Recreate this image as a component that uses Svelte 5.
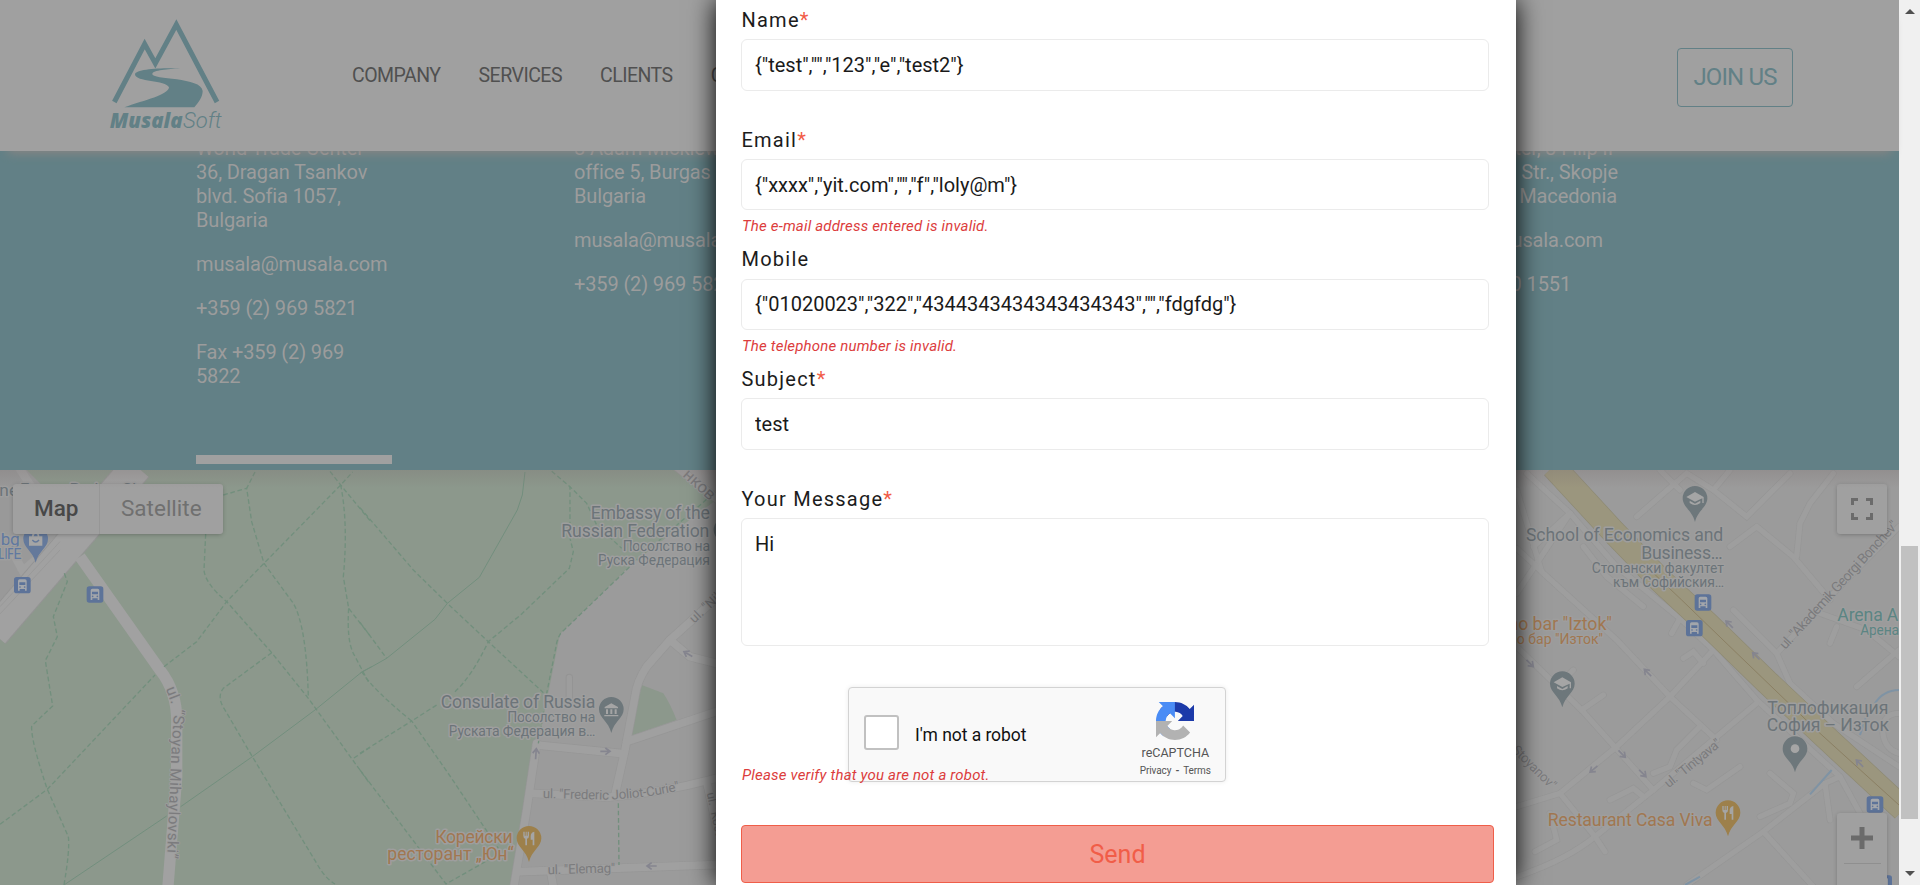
<script>
  const nav = ['COMPANY', 'SERVICES', 'CLIENTS', 'CAREERS'];
  const sofia = [['World Trade Center', '36, Dragan Tsankov', 'blvd. Sofia 1057,', 'Bulgaria'], ['musala@musala.com'], ['+359 (2) 969 5821'], ['Fax +359 (2) 969', '5822']];
  const burgas = [['8 Adam Mickiewicz,', 'office 5, Burgas 8001', 'Bulgaria'], ['musala@musala.com'], ['+359 (2) 969 5821']];
  const skopje = [
    [{ t: 'Center, 3 Filip II', w: 202 }, { t: 'Makedonski Str., Skopje', w: 207 }, { t: '1000, Macedonia', w: 206 }],
    [{ t: 'musala@musala.com', w: 192 }],
    [{ t: '+389 2 510 1551', w: 160 }]
  ];
  const fields = [
    { label: 'Name', req: true, value: '{"test","","123","e","test2"}', error: '' },
    { label: 'Email', req: true, value: '{"xxxx","yit.com","","f","loly@m"}', error: 'The e-mail address entered is invalid.' },
    { label: 'Mobile', req: false, value: '{"01020023","322","4344343434343434343","","fdgfdg"}', error: 'The telephone number is invalid.' },
    { label: 'Subject', req: true, value: 'test', error: '' }
  ];

  const westTrails = [
    'M193 340L202 365 160 470 172 530 136 602 158 738 95 798Q92 840 142 988L205 1130Q210 1170 192 1275',
    'M0 1093L142 988 465 645', 'M492 620L590 545 680 425 792 310 1022 75 1058 36',
    'M765 36L740 85 755 185 792 310 880 430Q920 500 925 715', 'M670 105L740 85',
    'M617 222L612 330Q615 370 680 425L815 578 925 715 1110 972',
    'M815 578L670 685Q650 710 672 745L757 890 950 1210Q975 1255 1005 1272',
    'M990 34L1022 75 1110 182', 'M1022 75Q1045 190 1030 350L1046 445 1110 527',
    'M1046 445Q1040 540 1060 580L1105 665', 'M1110 862L1056 898'
  ];
  const eastTrails = [
    'M0 143L160 330 262 430 385 545 550 698', 'M0 487L80 595', 'M5 635Q40 690 155 783L230 735',
    'M0 880L155 783 268 945 385 1120 415 1165', 'M285 695Q335 650 385 545L485 462 628 325 640 275 630 235 630 80',
    'M575 34L630 80 680 130 710 195 785 265', 'M0 930L258 1272 385 1200', 'M1040 118L905 235 820 310 602 520Q590 540 588 560L560 700 535 850',
    'M775 1030L777 1215'
  ];
  const centreRoads = [
    'M1068 415L930 540 860 620Q830 665 825 710L795 870 766 1000', 'M930 540L990 590 1068 610', 'M530 855L780 880',
    'M800 845L1068 755', 'M517 1000L740 1012Q900 1000 1068 955', 'M480 1235L1068 1214', 'M530 850L500 1050 460 1290',
    'M573 1240L580 1280', 'M950 20L1075 120', 'M1040 965L1070 1100'
  ];
  const rightRoads = [
    'M80 40L210 160 350 320 540 475 640 570 770 720 900 840 1020 950 1080 1060',
    'M50 90L125 335 350 540 510 710 650 840', 'M50 400L210 160', 'M50 265L125 335', 'M210 160L100 260',
    'M410 170L560 40 640 90 740 170 870 40', 'M480 30L540 90', 'M640 90L690 30', 'M540 475L515 520',
    'M250 260L320 350 430 440', 'M50 560L245 750 460 990', 'M245 750L310 705', 'M180 670L220 630',
    'M640 570L510 710 350 860 180 1000 50 1040', 'M50 1250Q200 1200 285 1130L460 990 770 730',
    'M180 1000L285 1130 315 1175', 'M105 1175L170 1140 150 1060', 'M330 1020L400 985 430 1010',
    'M600 800L530 870 510 920 460 940', 'M550 595L580 575 610 610', 'M560 1275L790 1115 975 970 1020 950',
    'M790 1115L940 1280', 'M975 970L990 1080', 'M720 920L620 990 580 970', 'M810 940L880 1000 870 1030 780 1070',
    'M770 200L690 260M770 200L880 290 990 420', 'M1000 40L930 130 900 190 890 290',
    'M830 580L980 420 1197 200', 'M960 460L1100 510 1197 590', 'M1070 680L1197 570', 'M990 550L1010 500',
    'M700 450L830 580 870 670 1000 790 1197 920', 'M1197 760Q1140 760 1150 830Q1160 870 1197 880'
  ];
  const buses = [[67, 375], [285, 403]];
  const busesEast = [[609, 427], [583, 504], [1125, 1033], [1151, 1270]];
  const arrowsEast = [[90, 610, 45], [443, 638, 225], [688, 493, 225], [768, 588, 225], [1079, 910, 225], [366, 882, 45], [428, 940, 45], [281, 927, 140]];
</script>

{#snippet pin(x, y, kind, fill)}
  <g transform="translate({x} {y})">
    <path d="M-37 0A37 37 0 0 1 37 0C37 27 8 36 0 71C-8 36-37 27-37 0Z" {fill} />
    {#if kind === 'food'}
      <path d="M-17-20v12q0 8 6 9v20h5v-20q6-1 6-9v-12h-4v12h-3v-12h-3v12h-3v-12zM5-7q0-11 11-13v41h-5v-17h-6z" fill="#a5a5a5" />
    {:else if kind === 'school'}
      <path d="M-26-4L0-19 26-4V14H22V0L0 10Z M-16 7L0 16 16 7V14Q0 26-16 14Z" fill="#a5a5a5" />
    {:else if kind === 'bank'}
      <path d="M-20-7L0-18 20-7V-3H-20ZM-16 0h6v14h-6zM-3 0h6v14h-6zM10 0h6v14h-6zM-21 17h42v4h-42z" fill="#a5a5a5" />
    {:else if kind === 'shop'}
      <path d="M-20-8h9q0-13 11-13t11 13h9v28h-40zM-6-8H6q0-8-6-8t-6 8z" fill="#a5a5a5" />
      <path d="M-10 3q10 12 20 0" fill="none" stroke={fill} stroke-width="4" />
    {:else}
      <circle r="13" fill="#a5a5a5" />
    {/if}
  </g>
{/snippet}

{#snippet bus(x, y)}
  <g transform="translate({x} {y})">
    <rect x="-25" y="-24" width="50" height="49" rx="8" fill="#5d7399" />
    <path d="M-13-12q0-5 5-5H8q5 0 5 5V17H8v-5H-8v5h-5zM-9-8V0H9V-8z" fill="#a3a6ab" />
    <circle cx="-7" cy="6" r="2.5" fill="#5d7399" /><circle cx="7" cy="6" r="2.5" fill="#5d7399" />
  </g>
{/snippet}

<div class="screen">
  <div class="site">
    <header>
      <svg class="logo" viewBox="0 0 480 450" width="160" height="150">
        <path d="M73 306L164 132 196 190 259 74 381 306" fill="none" stroke="#628086" stroke-width="15" />
        <path d="M270 205C210 203 136 207 135 223C136 247 228 240 237 262C235 285 165 300 103 322H313C327 305 338 290 338 273C335 230 185 240 187 222C188 210 235 208 270 205Z" fill="#628086" />
        <text x="59" y="384" textLength="219" lengthAdjust="spacingAndGlyphs" class="bold">Musala</text>
        <text x="279" y="384" textLength="116" lengthAdjust="spacingAndGlyphs" class="thin">Soft</text>
      </svg>
      <nav>{#each nav as item}<span>{item}</span>{/each}</nav>
      <button class="join">JOIN US</button>
    </header>

    <section class="offices">
      <div class="office first">
        {#each sofia as para}<p>{#each para as line}<span>{line}</span>{/each}</p>{/each}
        <div class="bar"></div>
      </div>
      <div class="office second">
        {#each burgas as para}<p>{#each para as line}<span>{line}</span>{/each}</p>{/each}
      </div>
      <div class="office third">
        {#each skopje as para}<p>{#each para as line}<span style="width:{line.w}px">{line.t}</span>{/each}</p>{/each}
      </div>
    </section>

    <div class="map">
      <svg viewBox="0 470 1899 415" width="1899" height="415">
        <rect y="470" width="1899" height="415" fill="#9b9b9b" />
        <path d="M0 470H680L716 500 633 563 560 634 537 750 512 885H0Z" fill="#8c988c" />
        <g transform="translate(0 460) scale(.33333)">
          <path d="M0 30H80L200 150 235 225 0 500Z" fill="#999" />
          <path d="M55 20L110 105M40 280L75 345M60 340L180 235" fill="none" stroke="#a0a0a0" stroke-width="25" />
          <path d="M-20 520L410 20" stroke="#949494" stroke-width="98" />
          <path d="M-20 520L410 20" stroke="#a1a1a1" stroke-width="92" />
          <path d="M0 462L180 270M0 440L180 245" stroke="#959595" stroke-width="2" />
          <path d="M240 290L480 630Q535 700 530 800L530 950 503 1290" fill="none" stroke="#a1a1a1" stroke-width="34" />
          <g class="trails">{#each westTrails as d}<path {d} />{/each}</g>
          <path d="M192 1275L500 1068M542 1040L757 890 945 750 1088 634 1115 620" fill="none" stroke="#728f7d" stroke-width="3" />
          <g class="label grey"><text x="-2" y="108" font-size="52">ne</text><text x="60" y="106" font-size="50">Fusao Park – Sky</text></g>
          <g class="label blue"><text x="2" y="254" font-size="52" textLength="57">bg</text><text x="-6" y="297" font-size="42" textLength="70">LIFE</text></g>
          {@render pin(107, 237, 'shop', '#64799b')}
          {#each buses as [x, y]}{@render bus(x, y)}{/each}
          <path id="stoyan" d="M497 686L522 752Q516 850 512 920L500 1220" fill="none" />
          <g class="label street"><text font-size="46"><textPath href="#stoyan" textLength="515">ul. “Stoyan Mihaylovski”</textPath></text></g>
        </g>

        <g transform="translate(360 460) scale(.33333)">
          <path d="M845 675L910 700Q930 730 950 780L810 828Z" fill="#8c988c" />
          <g class="edge">{#each centreRoads as d}<path {d} />{/each}</g>
          <path d="M628 652V735" stroke="#949494" stroke-width="22" stroke-linecap="round" />
          <g class="road">{#each centreRoads as d}<path {d} />{/each}</g>
          <path d="M628 652V735" stroke="#9d9d9d" stroke-width="16" stroke-linecap="round" />
          <g class="trails">{#each eastTrails as d}<path {d} />{/each}</g>
          <path d="M0 640L80 595 225 478 262 430 358 352 472 150 487 105 495 36" fill="none" stroke="#728f7d" stroke-width="3" />
          <g class="arrows">
            <path transform="translate(528 880) rotate(-86)" d="M-18 0H12M0-10L14 0 0 10" />
            <path transform="translate(736 874)" d="M-15 0H12M0-10L14 0 0 10" />
            <path transform="translate(984 582) rotate(210)" d="M-15 0H12M0-10L14 0 0 10" />
            <path transform="translate(875 1218) rotate(180)" d="M-15 0H12M0-10L14 0 0 10" />
          </g>
          <g class="label grey">
            <text x="692" y="178" font-size="53" textLength="358">Embassy of the</text>
            <text x="604" y="231" font-size="53" textLength="444">Russian Federation</text>
            <text x="788" y="273" font-size="42" textLength="262">Посолство на</text>
            <text x="714" y="315" font-size="42" textLength="336">Руска Федерация</text>
            <text x="242" y="745" font-size="53" textLength="464">Consulate of Russia</text>
            <text x="442" y="787" font-size="42" textLength="264">Посолство на</text>
            <text x="266" y="829" font-size="42" textLength="440">Руската Федерация в…</text>
          </g>
          <g class="label orange">
            <text x="226" y="1148" font-size="53" textLength="232">Корейски</text>
            <text x="82" y="1200" font-size="53" textLength="379">ресторант „Юн“</text>
          </g>
          <path id="curie" d="M548 1014L740 1019Q860 1015 965 990" fill="none" />
          <g class="label street">
            <text font-size="40"><textPath href="#curie" textLength="414">ul. "Frederic Joliot-Curie"</textPath></text>
            <text font-size="40" transform="translate(563 1243) rotate(-1.5)" textLength="203">ul. "Elemag"</text>
            <text font-size="40" transform="translate(1003 491) rotate(-43)">ul. "Nikolay</text>
            <text font-size="50" transform="translate(966 48) rotate(42)">нков</text>
            <text font-size="36" transform="translate(1040 1000) rotate(78)">ul. "Kosta</text>
          </g>
          {@render pin(754, 748, 'bank', '#6d777b')}
          {@render pin(507, 1135, 'food', '#9d804b')}
          {@render pin(1098, 210, 'bank', '#6d777b')}
        </g>

        <g transform="translate(1500 460) scale(.33333)">
          <g class="edge small">{#each rightRoads as d}<path {d} />{/each}</g>
          <g class="road small">{#each rightRoads as d}<path {d} />{/each}</g>
          <path d="M160 20L340 215 480 360 620 490 800 665 970 825 1110 955 1210 1048" fill="none" stroke="#8e8a74" stroke-width="75" />
          <path d="M160 20L340 215 480 360 620 490 800 665 970 825 1110 955 1210 1048" fill="none" stroke="#9b967e" stroke-width="71" />
          <path d="M440 320L545 420 690 560 960 820 1197 1035" fill="none" stroke="#8b8063" stroke-width="3" />
          <path d="M1080 825L1097 775M1125 730Q1150 690 1200 690M930 1003L995 930M555 1275L600 1250" fill="none" stroke="#7f93a4" stroke-width="6" />
          <g class="arrows">{#each arrowsEast as [x, y, r]}<path transform="translate({x} {y}) rotate({r})" d="M-15 0H12M0-10L14 0 0 10" />{/each}</g>
          <g class="label grey">
            <text x="78" y="243" font-size="53" textLength="592">School of Economics and</text>
            <text x="424" y="296" font-size="53" textLength="244">Business…</text>
            <text x="275" y="340" font-size="42" textLength="397">Стопански факултет</text>
            <text x="339" y="382" font-size="42" textLength="333">към Софийския…</text>
            <text x="802" y="762" font-size="53" textLength="363">Топлофикация</text>
            <text x="800" y="814" font-size="53" textLength="367">София – Изток</text>
          </g>
          <g class="label orange">
            <text x="336" y="511" font-size="53" text-anchor="end">Piano bar "Iztok"</text>
            <text x="309" y="553" font-size="42" text-anchor="end">Пиано бар "Изток"</text>
            <text x="143" y="1097" font-size="53" textLength="495">Restaurant Casa Viva</text>
          </g>
          <g class="label teal">
            <text x="1012" y="483" font-size="53" textLength="183">Arena A</text>
            <text x="1081" y="526" font-size="42" textLength="116">Арена</text>
          </g>
          <g class="label street">
            <text font-size="42" transform="translate(856 570) rotate(-47.5)" textLength="505">ul. "Akademik Georgi Bonchev"</text>
            <text font-size="40" transform="translate(506 985) rotate(-39)" textLength="206">ul. "Tintyava"</text>
            <text font-size="40" transform="translate(34 872) rotate(45)" textLength="168">Stoyanov"</text>
          </g>
          {@render pin(585, 115, 'school', '#6d777b')}
          {@render pin(187, 671, 'school', '#6d777b')}
          {@render pin(885, 866, '', '#6d777b')}
          {@render pin(684, 1058, 'food', '#9d804b')}
          {#each busesEast as [x, y]}{@render bus(x, y)}{/each}
        </g>
      </svg>
      <div class="types"><b>Map</b><span>Satellite</span></div>
      <div class="control full">
        <svg viewBox="0 0 22 22" width="22" height="22"><path d="M1.5 7V1.5H7M15 1.5h5.500V7M20.500 15v5.500H15M7 20.500H1.500V15" fill="none" stroke="#6b6b6b" stroke-width="3" /></svg>
      </div>
      <div class="control zoom">
        <svg viewBox="0 0 22 22" width="22" height="22"><path d="M11 0V22M0 11H22" stroke="#6b6b6b" stroke-width="5" /></svg>
        <hr />
      </div>
    </div>
  </div>

  <div class="scroll">
    <i class="up"></i>
    <div class="thumb"></div>
    <i class="down"></i>
  </div>

  <div class="modal">
    {#each fields as f}
      <div class="field">
        <label for={f.label}>{f.label}{#if f.req}<em>*</em>{/if}</label>
        <input id={f.label} value={f.value} spellcheck="false" />
        {#if f.error}<p class="error">{f.error}</p>{/if}
      </div>
    {/each}
    <div class="field message">
      <label for="msg">Your Message<em>*</em></label>
      <textarea id="msg" spellcheck="false">Hi</textarea>
    </div>
    <div class="captcha">
      <span class="check"></span>
      <span class="robot">I'm not a robot</span>
      <div class="brand">
        <svg viewBox="0 0 64 64" width="38" height="38">
          <path fill="#1c3aa9" d="M64 31.955l-.033-1.370V4.687l-7.160 7.160C50.948 4.674 42.033.093 32.050.093c-10.400 0-19.622 4.960-25.458 12.640l11.736 11.860a15.550 15.550 0 0 1 4.754-5.334c2.050-1.600 4.952-2.906 8.968-2.906.485 0 .860.057 1.135.163 4.976.393 9.288 3.140 11.828 7.124l-8.307 8.307L64 31.953" />
          <path fill="#4a8cf5" d="M31.862.094l-1.370.033H4.594l7.160 7.160C4.580 13.147 0 22.060 0 32.046c0 10.400 4.960 19.622 12.640 25.458L24.500 45.768a15.550 15.550 0 0 1-5.334-4.754c-1.600-2.050-2.906-4.952-2.906-8.968 0-.485.057-.860.163-1.135.393-4.976 3.140-9.288 7.124-11.828l8.307 8.307L31.860.095" />
          <path fill="#b2b2b2" d="M.001 32.045l.033 1.370v25.898l7.160-7.160c5.860 7.173 14.774 11.754 24.760 11.754 10.400 0 19.622-4.960 25.458-12.640l-11.736-11.860a15.550 15.550 0 0 1-4.754 5.334c-2.050 1.600-4.952 2.906-8.968 2.906-.485 0-.860-.057-1.135-.163-4.976-.393-9.288-3.140-11.828-7.124l8.307-8.307c-10.522.040-22.400.066-27.295-.005" />
        </svg>
        <span class="re">reCAPTCHA</span>
        <span class="terms">Privacy<b>-</b>Terms</span>
      </div>
    </div>
    <p class="error verify">Please verify that you are not a robot.</p>
    <button class="send">Send</button>
  </div>
</div>

<style>
  :global(body) { margin: 0; overflow: hidden; }
  .screen { position: relative; display: flex; width: 1920px; height: 885px; overflow: hidden; font-family: Roboto, "Liberation Sans", sans-serif; font-size: 20px; }
  .screen * { box-sizing: border-box; }
  p { margin: 0; }
  .site { display: flex; flex-direction: column; width: 1899px; height: 885px; }
  header { position: relative; z-index: 1; display: flex; height: 151px; flex: none; padding-left: 90px; background: #a0a0a0; box-shadow: 0 10px 10px -8px #8c8583; }
  .logo { flex: none; }
  .logo text { font-style: italic; fill: #628086; }
  .logo .bold { font-family: "Open Sans", sans-serif; font-weight: 800; font-size: 65px; }
  .logo .thin { font-family: Roboto, sans-serif; font-weight: 300; font-size: 66px; }
  nav { display: flex; gap: 38px; margin: 64px 0 0 102px; width: 520px; color: #505050; font-weight: 400; font-size: 19.500px; line-height: 24px; letter-spacing: -.52px; }
  .join { width: 116px; height: 59px; margin: 48px 0 0 auto; margin-right: 106px; padding: 0; border: 1px solid #628086; border-radius: 4px; background: none; color: #628086; font: 400 24px/57px Roboto, sans-serif; letter-spacing: -.85px; white-space: nowrap; }
  .offices { position: relative; display: flex; height: 319px; flex: none; background: #628086; color: #9c9c9c; font-weight: 400; letter-spacing: -.13px; line-height: 24px; }
  .office { margin-top: -15px; white-space: nowrap; }
  .office p { margin-bottom: 20px; }
  .office span { display: block; }
  .first { width: 378px; margin-left: 196px; }
  .second { width: 837px; }
  .third span { display: flex; justify-content: flex-end; }
  .bar { width: 196px; height: 9px; margin-top: 67px; background: #a0a0a0; }
  .map { position: relative; height: 415px; flex: none; overflow: hidden; }
  .map > svg { display: block; }
  .map::after { content: ""; position: absolute; inset: 0 0 auto; height: 18px; background: linear-gradient(#7a6f6f44, transparent); }
  .trails path { fill: none; stroke: #728f7d; stroke-width: 4; stroke-dasharray: 14 8; }
  .edge path { fill: none; stroke: #969696; stroke-width: 27; stroke-linecap: round; }
  .road path { fill: none; stroke: #a0a0a0; stroke-width: 23; stroke-linecap: round; }
  .edge.small path { stroke: #969696; stroke-width: 20; }
  .road.small path { stroke: #9e9e9e; stroke-width: 16; }
  .arrows path { fill: none; stroke: #85858f; stroke-width: 5; }
  .label text { paint-order: stroke; stroke: #9e9e9e; stroke-width: 9px; stroke-linejoin: round; }
  .grey { fill: #6c7479; }
  .blue { fill: #6078a0; }
  .orange { fill: #a17750; }
  .teal { fill: #5b8583; }
  .street { fill: #7b7b7d; }
  .street text { stroke-width: 5px; }
  .types { position: absolute; left: 13px; top: 14px; display: flex; width: 210px; height: 50px; background: #a0a0a0; border-radius: 3px; box-shadow: 0 1px 5px -1px #0005; font-size: 22.500px; line-height: 49px; color: #707070; }
  .types b { width: 87px; border-right: 1px solid #969696; padding-left: 21px; font-weight: 500; color: #484848; }
  .types span { padding-left: 21px; }
  .control { position: absolute; left: 1837px; display: flex; flex-direction: column; align-items: center; width: 50px; padding-top: 14px; background: #a0a0a0; border-radius: 3px; box-shadow: 0 1px 5px -1px #0005; }
  .full { top: 14px; height: 50px; }
  .zoom { top: 343px; height: 101px; }
  .zoom hr { width: 37px; height: 1px; border: 0; margin: 14px 0 0; background: #8f8f8f; }
  .scroll { display: flex; flex-direction: column; align-items: center; width: 21px; background: #f0f0f0; }
  .up { margin-top: 9px; border: 5px solid transparent; border-top: 0; border-bottom: 5px solid #505050; }
  .thumb { width: 17px; height: 273px; margin-top: 532px; background: #c1c1c1; }
  .down { margin-top: 52px; border: 5px solid transparent; border-bottom: 0; border-top: 5px solid #505050; }
  .modal { position: absolute; z-index: 3; left: 716px; top: 0; width: 800px; height: 885px; padding-left: 25px; background: #fff; box-shadow: 0 0 25px #000; }
  .field { display: flex; flex-direction: column; height: 119.660px; padding-top: 8px; }
  label { height: 31.300px; line-height: 24px; font-weight: 400; letter-spacing: 1.230px; color: #1c1c1c; padding-left: .5px; }
  label em { font-style: normal; color: #f15c48; }
  input, textarea { display: block; width: 748px; height: 51.500px; margin: 0; padding: 0 13px; border: 1px solid #ebebeb; border-radius: 6px; background: #fff; color: #1a1a1a; font: 400 20px Roboto, sans-serif; outline: 0; resize: none; overflow: hidden; }
  .message { height: 208px; }
  textarea { height: 128px; padding-top: 13px; }
  .error { margin-top: 5px; font: italic 400 15px/22px Roboto, sans-serif; letter-spacing: .18px; color: #dc3d3d; white-space: nowrap; padding-left: 1px; }
  .captcha { display: flex; width: 378px; height: 95px; margin-left: 107px; border: 1px solid #d3d3d3; border-radius: 4px; background: #f9f9f9; box-shadow: 0 0 5px #00000014; }
  .check { width: 35px; height: 35px; margin: 27px 16px 0 15px; border: 2px solid #c1c1c1; border-radius: 3px; background: #fff; flex: none; }
  .robot { width: 212px; margin-top: 36px; font-size: 17.500px; line-height: 22px; color: #111; font-weight: 400; letter-spacing: -.05px; }
  .brand { display: flex; flex-direction: column; align-items: center; width: 100px; padding-top: 14px; color: #555; }
  .re { font-size: 12.500px; line-height: 16px; margin-top: 5px; }
  .terms { font-size: 10px; line-height: 14px; margin-top: 3px; letter-spacing: -.1px; }
  .terms b { margin: 0 4px; }
  .verify { position: relative; margin-top: -18px; }
  .send { display: block; width: 753px; height: 58px; margin-top: 39px; padding: 0; border: 1px solid #ef5e49; border-radius: 4px; background: #f49d93; color: #f15d48; font: 400 25px/58px Roboto, sans-serif; }
</style>
